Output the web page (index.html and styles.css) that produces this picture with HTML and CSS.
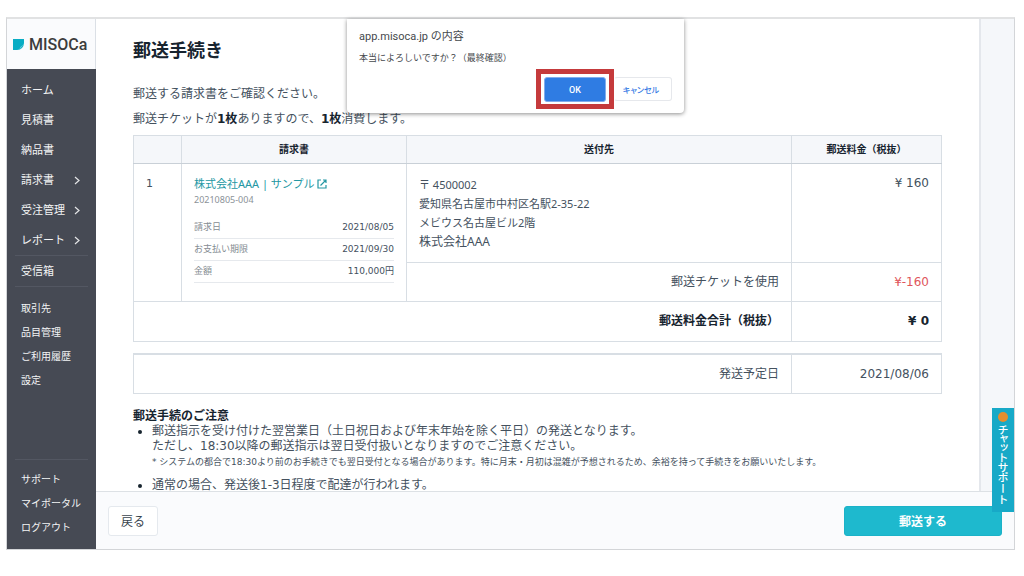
FILE: index.html
```html
<!DOCTYPE html>
<html lang="ja">
<head>
<meta charset="utf-8">
<title>郵送手続き | Misoca</title>
<link rel="stylesheet" href="styles.css">
</head>
<body>
<div class="app">
  <aside class="sidebar">
    <a class="logo" href="#">
      <svg class="logo-mark" viewBox="0 0 11 11" aria-hidden="true"><path d="M0 0h11v4Q10.5 10.500 4 11H0z" fill="#09adc4"/><path d="M11 5 6 11 7.500 8z" fill="#7fd3df"/></svg>
      <span>MISOCa</span>
    </a>
    <nav class="menu">
      <ul class="menu-main">
        <li><a href="#">ホーム</a></li>
        <li><a href="#">見積書</a></li>
        <li><a href="#">納品書</a></li>
        <li><a href="#">請求書<svg class="chevron" viewBox="0 0 6 9"><path d="M1 1l4 3.5L1 8"/></svg></a></li>
        <li><a href="#">受注管理<svg class="chevron" viewBox="0 0 6 9"><path d="M1 1l4 3.5L1 8"/></svg></a></li>
        <li><a href="#">レポート<svg class="chevron" viewBox="0 0 6 9"><path d="M1 1l4 3.5L1 8"/></svg></a></li>
        <li class="inbox"><a href="#">受信箱</a></li>
      </ul>
      <ul class="menu-sub">
        <li><a href="#">取引先</a></li>
        <li><a href="#">品目管理</a></li>
        <li><a href="#">ご利用履歴</a></li>
        <li><a href="#">設定</a></li>
      </ul>
      <ul class="menu-sub menu-bottom">
        <li><a href="#">サポート</a></li>
        <li><a href="#">マイポータル</a></li>
        <li><a href="#">ログアウト</a></li>
      </ul>
    </nav>
  </aside>

  <div class="page">
    <div class="body">
      <main class="content">
        <h1>郵送手続き</h1>
        <div class="intro">
          <p>郵送する請求書をご確認ください。</p>
          <p>郵送チケットが<b>1枚</b>ありますので、<b>1枚</b>消費します。</p>
        </div>
        <table class="orders">
          <colgroup><col class="col-no"><col class="col-invoice"><col><col class="col-fee"></colgroup>
          <thead>
            <tr><th></th><th>請求書</th><th>送付先</th><th>郵送料金（税抜）</th></tr>
          </thead>
          <tbody>
            <tr class="row-item">
              <td class="no" rowspan="2">1</td>
              <td class="invoice" rowspan="2">
                <a class="invoice-link" href="#">株式会社AAA | サンプル <svg class="external" viewBox="0 0 10 10"><path d="M4 1H1v8h8V6M6 1h3v3M9 1L3.5 6.5"/></svg></a>
                <p class="invoice-no">20210805-004</p>
                <dl>
                  <div><dt>請求日</dt><dd>2021/08/05</dd></div>
                  <div><dt>お支払い期限</dt><dd>2021/09/30</dd></div>
                  <div><dt>金額</dt><dd>110,000円</dd></div>
                </dl>
              </td>
              <td class="address">
                <p>〒 4500002</p>
                <p>愛知県名古屋市中村区名駅2-35-22</p>
                <p>メビウス名古屋ビル2階</p>
                <p class="addressee">株式会社AAA</p>
              </td>
              <td class="amount">¥ 160</td>
            </tr>
            <tr class="row-sum"><td class="amount">郵送チケットを使用</td><td class="amount minus">¥-160</td></tr>
            <tr class="row-sum total"><td class="amount" colspan="3">郵送料金合計（税抜）</td><td class="amount">¥ 0</td></tr>
          </tbody>
        </table>
        <table class="orders schedule">
          <colgroup><col><col class="col-fee"></colgroup>
          <tbody><tr class="row-sum"><td class="amount">発送予定日</td><td class="amount">2021/08/06</td></tr></tbody>
        </table>
        <section class="notice">
          <h2>郵送手続のご注意</h2>
          <ul>
            <li>郵送指示を受け付けた翌営業日（土日祝日および年末年始を除く平日）の発送となります。<br>ただし、18:30以降の郵送指示は翌日受付扱いとなりますのでご注意ください。
              <p class="note">* システムの都合で18:30より前のお手続きでも翌日受付となる場合があります。特に月末・月初は混雑が予想されるため、余裕を持って手続きをお願いいたします。</p>
            </li>
            <li>通常の場合、発送後1-3日程度で配達が行われます。</li>
          </ul>
        </section>
      </main>
      <div class="gutter"></div>
    </div>
    <footer class="actions">
      <button class="back" type="button">戻る</button>
      <button class="send" type="button">郵送する</button>
    </footer>
  </div>

  <div class="dialog" role="dialog" aria-labelledby="dialog-title">
    <h2 id="dialog-title">app.misoca.jp の内容</h2>
    <p>本当によろしいですか？（最終確認）</p>
    <div class="dialog-buttons">
      <span class="highlight"><button class="ok" type="button">OK</button></span>
      <button class="cancel" type="button">キャンセル</button>
    </div>
  </div>
  <button class="chat" type="button"><span class="chat-dot"></span><span class="chat-label">チャットサポート</span></button>
</div>
</body>
</html>
```
FILE: styles.css
```css
* { box-sizing: border-box; }

body {
  margin: 0;
  height: 100vh;
  padding: 17px 9px 26px 6px;
  background: #fff;
  color: #44515e;
  font-family: "DejaVu Sans", "Noto Sans CJK JP", sans-serif;
  font-size: 12px;
  line-height: 15px;
}

h1, h2, p, ul, dl, dd { margin: 0; padding: 0; }
a { color: inherit; text-decoration: none; }
button { font-family: inherit; cursor: pointer; }

.app {
  position: relative;
  display: flex;
  height: 100%;
  border: 1px solid #d3d5d8;
  border-top: 2px solid #e1e2e3;
}

/* Sidebar */
.sidebar {
  display: flex;
  flex-direction: column;
  flex: none;
  width: 89px;
  background: #464a54;
  color: #f3f4f5;
}

.logo {
  display: flex;
  align-items: center;
  gap: 5px;
  height: 50px;
  padding-left: 6px;
  border-right: 1px solid #dbe0e6;
  background: #fafbfd;
  color: #3c3c3c;
  font-family: Roboto, sans-serif;
  font-size: 16px;
  font-weight: 500;
}

.logo-mark { width: 11px; height: 11px; }

.menu {
  display: flex;
  flex: 1;
  flex-direction: column;
  padding: 6px 8px 10px;
}

.menu ul { list-style: none; }
.menu a { display: flex; align-items: center; padding: 0 6px; }
.menu-main { border-bottom: 1px solid #535762; font-size: 11px; }
.menu-main a { height: 30px; justify-content: space-between; }
.inbox { border-top: 1px solid #535762; }
.chevron { width: 6px; height: 9px; margin-right: 2px; fill: none; stroke: #e4e5e7; stroke-width: 1.2; }
.menu-sub { padding-top: 9px; font-size: 10px; }
.menu-sub a { height: 24px; }
.menu-bottom { margin-top: auto; padding-top: 7px; border-top: 1px solid #535762; }

/* Page */
.page { display: flex; flex: 1; flex-direction: column; min-width: 0; }
.body { display: flex; flex: 1; min-height: 0; overflow: hidden; }
.content { flex: 1; padding: 20px 37px 0; }
.gutter { width: 35px; border-left: 2px solid #e4e7ec; background: #f5f7fa; }

h1 { margin-bottom: 19px; color: #17242f; font-size: 18px; line-height: 24px; }
.intro { margin-bottom: 3px; line-height: 25px; }
b { color: #17242f; }

.orders { width: 100%; border-collapse: collapse; table-layout: fixed; }
.orders th, .orders td { border: 1px solid #d8dee4; }
.orders th {
  height: 28px;
  padding: 0;
  border-bottom-color: #c9d0d7;
  background: #f5f7fa;
  color: #17242f;
  font-size: 10px;
}
.orders td { padding: 12px; vertical-align: top; }
.col-no { width: 48px; }
.col-invoice { width: 225px; }
.col-fee { width: 150px; }
.orders .no { font-size: 11px; }
.row-item { height: 99px; }
.orders .amount { text-align: right; }
.orders .row-sum td { padding-top: 12px; padding-bottom: 11px; }
.orders .total td { padding-bottom: 12px; }
.orders .minus { color: #e0555c; }
.total { color: #17242f; font-weight: bold; }

.orders .invoice { padding-bottom: 8px; }
.invoice-link { color: #2497a3; font-family: "Noto Sans", "Noto Sans CJK JP", sans-serif; font-size: 11px; }
.external { width: 10px; height: 10px; vertical-align: -1px; fill: none; stroke: #2497a3; stroke-width: 1.2; }
.invoice-no { color: #8b9298; font-family: "Noto Sans", sans-serif; font-size: 9px; }
.invoice dl { margin-top: 10px; font-size: 9px; }
.invoice dl div {
  display: flex;
  justify-content: space-between;
  height: 22px;
  padding-top: 3px;
  border-bottom: 1px solid #e6e9ed;
}
.invoice dt { color: #858c92; }

.orders .address {
  padding-top: 11px;
  padding-bottom: 10px;
  font-family: "Noto Sans", "Noto Sans CJK JP", sans-serif;
  font-size: 11px;
  line-height: 19px;
}
.address .addressee { font-size: 12px; }

.schedule { margin-top: 11px; }
.schedule td { border-top-width: 2px; }

.notice { margin-top: 15px; }
.notice h2 { color: #17242f; font-size: 12px; line-height: 15px; }
.notice ul { padding-left: 19px; }
.notice li { margin-bottom: 8px; }
.notice li::marker { color: #17242f; }
.note { margin-top: 1px; font-size: 9px; }

.actions {
  display: flex;
  align-items: center;
  justify-content: space-between;
  height: 58px;
  padding: 0 12px;
  border-top: 1px solid #dde1e5;
  background: #fafbfd;
}
.actions button { height: 30px; border-radius: 3px; font-size: 12px; }
.back { width: 50px; padding: 0; border: 1px solid #e5e9ee; background: #fff; color: #39444e; }
.send { width: 158px; border: 1px solid #1bb2c8; background: #1eb9ce; color: #fff; font-weight: bold; }

/* Confirmation dialog */
.dialog {
  position: absolute;
  top: 0;
  left: 340px;
  width: 337px;
  padding: 10px 12px 4px;
  border-radius: 0 0 4px 4px;
  background: #fff;
  box-shadow: 0 1px 4px rgba(0, 0, 0, .45);
  color: #45494d;
  font-family: Roboto, "Noto Sans CJK JP", sans-serif;
}
.dialog h2 { font-size: 11px; font-weight: 400; }
.dialog p { margin-top: 7px; font-size: 9px; }
.dialog-buttons { display: flex; align-items: center; justify-content: flex-end; margin-top: 3px; }
.highlight { display: flex; padding: 3px 3px 2px; border: 5px solid #c53a3c; }
.dialog button { font-size: 9px; font-weight: 500; }
.ok {
  width: 62px;
  height: 25px;
  border: 1px solid #82acec;
  border-radius: 3px;
  background: #2f7ce3;
  color: #fff;
}
.dialog .cancel {
  width: 58px;
  height: 24px;
  padding: 0 4px 0 0;
  border: 1px solid #e6e8ec;
  border-left-color: #fff;
  border-radius: 3px;
  background: #fff;
  color: #3579e4;
  font-size: 8px;
  font-feature-settings: "palt";
}

/* Chat tab */
.chat {
  position: absolute;
  right: 0;
  bottom: 37px;
  display: flex;
  flex-direction: column;
  align-items: center;
  gap: 2px;
  width: 22px;
  height: 104px;
  padding: 4px 0 0;
  border: 0;
  background: #17a9c7;
  color: #fff;
  font-family: "Noto Sans CJK JP", sans-serif;
  font-size: 11px;
  font-weight: 500;
  line-height: 14px;
}
.chat-dot { flex: none; width: 10px; height: 10px; border-radius: 50%; background: #e58e2e; }
.chat-label { font-feature-settings: "vpal"; white-space: nowrap; writing-mode: vertical-rl; }
```
